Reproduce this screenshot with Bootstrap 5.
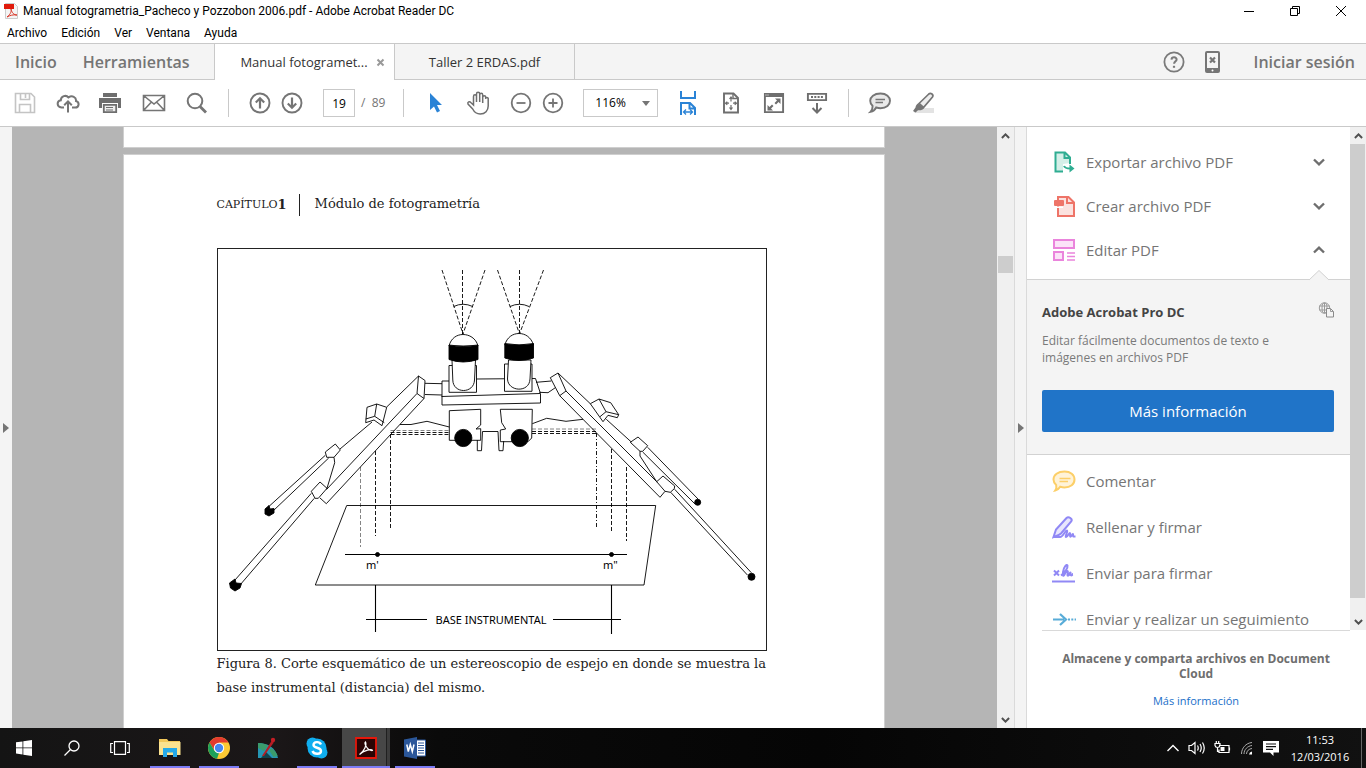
<!DOCTYPE html>
<html lang="es">
<head>
<meta charset="utf-8">
<meta name="viewport" content="width=device-width, initial-scale=1">
<title>Manual fotogrametria_Pacheco y Pozzobon 2006.pdf - Adobe Acrobat Reader DC</title>
<link href="https://cdn.jsdelivr.net/npm/bootstrap@5.3.0/dist/css/bootstrap.min.css" rel="stylesheet">
<style>
:root{--ui:"Open Sans","Noto Sans",sans-serif;--line:#c9c9c9;--strip:#f4f4f4;--ink:#757575}
body{font-family:var(--ui);font-size:12px;line-height:16px;color:#000;background:#fff}
button,input,select{font-family:inherit;color:inherit}
svg{display:block;flex:none}
.flatbtn{border:0;background:none;padding:0;display:flex;align-items:center;justify-content:center}
.titlebar{height:22px;padding-right:2px;font-family:Roboto,sans-serif}
.titlebar h1{font-size:12px;line-height:16px;font-weight:400}
.winbtn{width:46px;height:20px}
.menubar{height:21px;gap:14px;padding-left:7px;font-family:Roboto,sans-serif}
.menubar a,.tabstrip a{color:inherit;text-decoration:none}
.tabstrip{height:37px;background:var(--strip);border-top:1px solid var(--line);font-size:16px;color:var(--ink)}
.rule{border-bottom:1px solid var(--line)}
.home{width:215px;border-right:1px solid var(--line);padding-left:15px;gap:26px;font-weight:600}
.doctab{width:180px;font-size:13px;color:#333;border-right:1px solid var(--line)}
.doctab.active{background:#fff}
.account{gap:30px;padding-right:11px;font-weight:600}
.tools{height:47px;padding-left:12px;color:#757575}
.tgroup{display:flex;align-items:center;gap:17px}
.pair{display:flex;align-items:center;gap:6px}
.tool{width:26px;height:28px}
.vsep{width:1px;height:28px;background:var(--line);margin:0 18px}
.pager{margin-left:18px}
.pageno{width:32px;height:28px;border:1px solid var(--line);padding:0;text-align:center;color:#000;font-size:12px}
.zoombox{width:75px;height:28px;border:1px solid var(--line);padding:0 0 0 11px;color:#000;font-size:12px;appearance:none;background:#fff}
.zoomwrap{position:relative}
.zoomwrap svg{position:absolute;right:8px;top:12px;pointer-events:none}
.edge{width:12px;background:var(--strip)}
.edge.right{width:13px;border-left:1px solid #dadada;border-right:1px solid #dadada}
.canvas{background:#b5b5b5;min-width:0;padding-right:2px}
.sheet{width:762px;max-width:100%;background:#fff;border:1px solid #cfcfcf}
.sheet.prev{height:21px;border-top:0;margin-bottom:6px}
.sheet.current{height:700px;padding:39px 117px 0 93px;font-family:"DejaVu Serif",serif;color:#222}
.chapter{height:22px;margin-bottom:32px;font-size:13px}
.chapter .cap{font-size:11px}
.chapter .head{border-left:1px solid #222;margin-left:12px;padding-left:15px;height:22px;line-height:20px}
.plate{border:1px solid #222;width:100%}
.plate svg{width:100%;height:auto}
.legend-text{font-size:13px;line-height:24px;margin:1px 0 0}
.sbar{width:17px;background:#f0f0f0;padding:0 1px}
.sbar .thumb{background:#cdcdcd;height:17px;margin-top:112px}
.arrow{height:17px}
.side{width:339px}
.sidelist{height:503px;overflow:hidden}
.sidelist .scroll{width:16px;flex:none;background:#f0f0f0}
.sidelist .scroll .bar{background:#cdcdcd;margin-right:1px}
.arrow.low{height:32px;padding-top:16px}
.entries{padding-top:13px}
.entries.more{padding-top:3px}
.entry{width:100%;height:44px;padding:0 25px;font-size:15px;line-height:20px;color:#757575;justify-content:flex-start}
.entry svg:first-child{margin-right:10px}
.entry.tall{height:46px}
.promo{position:relative;background:var(--strip);border-top:1px solid #d2d2d2;border-bottom:1px solid #d2d2d2;height:176px;margin-top:7px;padding:22px 16px 0 15px}
.promo .notch{position:absolute;top:-11px;right:20px}
.promo h2{font-size:13px;line-height:20px;font-weight:700;color:#444;margin:0 0 10px}
.promo p{font-size:12px;line-height:17px;color:#7a7a7a;margin:0 0 24px;padding-right:32px}
.promo .cta{height:42px;font-size:15px;background:#2074c8;color:#fff;border:0;border-radius:2px;padding:0}
.store{margin:0 16px 0 15px;border-top:1px solid #d9d9d9;padding:20px 8px 0;font-size:12px;line-height:15px;color:#6e6e6e}
.store a{color:#1a6fc9;text-decoration:none;font-size:11px}
.taskbar{height:40px;background:linear-gradient(90deg,#141414,#1b1718 20%,#0a0a0a 32%,#050505 60%,#111);color:#fff}
.taskbtn{width:48px;height:40px;position:relative}
.taskapps{gap:1px;padding-left:2px}
.running::after{content:"";position:absolute;left:4px;right:4px;bottom:0;height:2px;background:#7b7bf5}
.running.front{background:linear-gradient(90deg,#474747 44px,#202020 44px,#202020 45px,#3c3c3c 45px)}
.running.front::after{left:0;right:0}
.tray{gap:8px;padding-right:4px}
.clock{font-size:11px;line-height:17px;width:66px;text-align:center}
.desk{width:1px;height:40px;background:#666}
</style>
</head>
<body class="vh-100 d-flex flex-column overflow-hidden">
<svg width="0" height="0" class="position-absolute" aria-hidden="true">
  <symbol id="up" viewBox="0 0 9 6"><path d="M.9 5 4.500 1.400 8.100 5" fill="none" stroke="#505050" stroke-width="2"/></symbol>
  <symbol id="chev" viewBox="0 0 12 8"><path d="M1 1.500 6 6.300 11 1.500" fill="none" stroke="#6e6e6e" stroke-width="2.400"/></symbol>
</svg>

<header>
  <div class="titlebar d-flex align-items-center">
    <svg class="ms-1 me-1" width="15" height="16" viewBox="0 0 15 16"><path d="M1.500.5h9l3 3V15.500h-12z" fill="#f4f4f4" stroke="#ccc"/><path d="M-2 1h12v5H-2z" fill="#e01b0c"/><path d="M3 14c4-3 4.500-6 4-8 1 4 3 6 6 6-4-.6-7 .4-10 2z" fill="none" stroke="#d9382a"/></svg>
    <h1 class="m-0 flex-grow-1">Manual fotogrametria_Pacheco y Pozzobon 2006.pdf - Adobe Acrobat Reader DC</h1>
    <button class="flatbtn winbtn" aria-label="Minimizar"><svg width="12" height="12"><path d="M1 6.500h10" stroke="#000"/></svg></button>
    <button class="flatbtn winbtn" aria-label="Restaurar"><svg width="12" height="12" fill="none" stroke="#000"><path d="M1.500 3.500h7v7h-7zM3.500 3V1.500h7v7H9"/></svg></button>
    <button class="flatbtn winbtn" aria-label="Cerrar"><svg width="12" height="12"><path d="M1 1 11 11M11 1 1 11" stroke="#000"/></svg></button>
  </div>
  <nav class="menubar d-flex align-items-center" aria-label="Menú">
    <a href="#">Archivo</a><a href="#">Edición</a><a href="#">Ver</a><a href="#">Ventana</a><a href="#">Ayuda</a>
  </nav>
  <div class="tabstrip d-flex">
    <nav class="home rule d-flex align-items-center"><a href="#">Inicio</a><a href="#">Herramientas</a></nav>
    <div class="doctab active d-flex align-items-center justify-content-center"><a href="#" class="ms-3">Manual fotogramet...</a>
      <button class="flatbtn ms-2" aria-label="Cerrar pestaña"><svg width="9" height="9"><path d="M1.500 1.500 7.500 7.500M7.500 1.500 1.500 7.500" stroke="#999" stroke-width="2"/></svg></button></div>
    <div class="doctab rule d-flex align-items-center justify-content-center"><a href="#">Taller 2 ERDAS.pdf</a></div>
    <div class="account rule flex-grow-1 d-flex align-items-center justify-content-end">
      <div class="tgroup">
        <button class="flatbtn" aria-label="Ayuda"><svg width="22" height="22" fill="none" stroke="#7a7a7a"><circle cx="11" cy="11" r="9.600" stroke-width="1.800"/><path d="M8.500 8.600c.2-3.200 5.300-3 5.100 0-.1 1.700-2.500 1.900-2.500 4.200" stroke-width="2"/><path d="M11 14.800v2" stroke-width="2.200"/></svg></button>
        <button class="flatbtn" aria-label="Dispositivos móviles"><svg width="22" height="22"><path d="M5 0h11a2 2 0 0 1 2 2v18a2 2 0 0 1-2 2H5a2 2 0 0 1-2-2V2a2 2 0 0 1 2-2zm0 2v15h11V2z" fill="#757575" fill-rule="evenodd"/><path d="m8 6.500 5 5m0-5-5 5" stroke="#757575" stroke-width="2.200"/><circle cx="10.500" cy="19.500" r="1" fill="#fff"/></svg></button>
      </div>
      <a href="#">Iniciar sesión</a>
    </div>
  </div>
  <div class="tools rule d-flex align-items-center" role="toolbar">
    <div class="tgroup">
      <button class="flatbtn tool" aria-label="Guardar"><svg width="22" height="22" fill="none" stroke="#c4c4c4" stroke-width="1.600"><path d="M1.500 1.500H17l3.500 3.500v15.500h-19zM6.500 1.500v6h9v-6M5.500 20v-7.500h11V20"/><path d="M11.500 2v4"/></svg></button>
      <button class="flatbtn tool" aria-label="Subir"><svg width="24" height="22" fill="none" stroke="#757575" stroke-width="2"><path d="M8 15.500H5.500C.5 15 .5 9 4.800 8.300 5 4 10 2.500 12.500 5.500 16 3 20.500 5 20 9c4 1.300 3 6.500-.7 6.500H16M12 20.500V9.500M8.200 13.200 12 9.400l3.800 3.800"/></svg></button>
      <button class="flatbtn tool" aria-label="Imprimir"><svg width="24" height="22"><path d="M4 1h14v4H4zM0 6h22v10h-3v-5H3v5H0z" fill="#6e6e6e"/><path d="M4.800 12.800h12.400v7.400H4.800z" fill="#eee" stroke="#6e6e6e" stroke-width="1.800"/><path d="M7 15.500h7M7 18h7" stroke="#6e6e6e"/></svg></button>
      <button class="flatbtn tool" aria-label="Correo"><svg width="24" height="22" fill="none" stroke="#757575" stroke-width="1.600"><path d="M1.500 3.500h21v15h-21zM1.500 3.500 12 12 22.500 3.500M1.500 18.500l7.500-8M22.500 18.500l-7.500-8"/></svg></button>
      <button class="flatbtn tool" aria-label="Buscar"><svg width="22" height="22" fill="none" stroke="#757575"><circle cx="9" cy="9" r="7.300" stroke-width="2"/><path d="m14 14.500 6 6" stroke-width="2.800"/></svg></button>
    </div>
    <span class="vsep"></span>
    <div class="pair">
      <button class="flatbtn tool" aria-label="Página anterior"><svg width="22" height="22" fill="none" stroke="#757575"><circle cx="11" cy="11" r="9.500" stroke-width="1.900"/><path d="M11 16.500V6.500M6.800 10.500 11 6.300l4.200 4.200" stroke-width="2.200"/></svg></button>
      <button class="flatbtn tool" aria-label="Página siguiente"><svg width="22" height="22" fill="none" stroke="#757575"><circle cx="11" cy="11" r="9.500" stroke-width="1.900"/><path d="M11 5.500v10M6.800 11.500l4.200 4.200 4.200-4.200" stroke-width="2.200"/></svg></button>
    </div>
    <div class="pair pager"><input class="pageno" aria-label="Página" value="19"><span>/&nbsp; 89</span></div>
    <span class="vsep"></span>
    <div class="tgroup">
      <button class="flatbtn tool" aria-label="Seleccionar"><svg width="14" height="22"><path d="M2 1v17l4-3.500 3 6 3-1.500-3-6h5z" fill="#2a83d6"/></svg></button>
      <button class="flatbtn tool" aria-label="Mano"><svg width="24" height="24" viewBox="0 0 24 24" fill="none" stroke="#6e6e6e" stroke-width="1.500"><path d="M7.500 14V5.500c0-2.300 3-2.300 3 0V11 3c0-2.300 3.200-2.300 3.200 0v8V4c0-2.200 3-2.200 3 0v8V6.500c0-2.200 3-2.200 3 0V7l1-.5c1.500 0 1.700 1 1.500 2v6.500c0 4.500-3 8-8 8-4 0-6-2-7.500-5L2 13c-.8-2 1.500-3 2.800-1.500z"/></svg></button>
      <div class="pair">
        <button class="flatbtn tool" aria-label="Alejar"><svg width="22" height="22" fill="none" stroke="#757575" stroke-width="1.800"><circle cx="11" cy="11" r="9.300"/><path d="M6.500 11h9"/></svg></button>
        <button class="flatbtn tool" aria-label="Acercar"><svg width="22" height="22" fill="none" stroke="#757575" stroke-width="1.800"><circle cx="11" cy="11" r="9.300"/><path d="M6.500 11h9M11 6.500v9"/></svg></button>
      </div>
      <div class="zoomwrap"><select class="zoombox" aria-label="Nivel de zoom"><option>116%</option></select><svg width="8" height="5"><path d="M0 0h8L4 5z" fill="#757575"/></svg></div>
      <button class="flatbtn tool" aria-label="Ajustar a ancho"><svg width="18" height="24" fill="none" stroke="#2a83d6" stroke-width="2"><path d="M2 0v7h14V0M2 24V12h9l5 5v7M10.500 12v5.500H16"/><path d="M4.500 21h9M7 18.500 4.500 21 7 23.500M11 18.500l2.500 2.500-2.500 2.500" stroke-width="1.300"/></svg></button>
      <button class="flatbtn tool" aria-label="Ajustar a página"><svg width="18" height="22" fill="none" stroke="#6e6e6e"><path d="M2 1.500h9.500L16 6v14.500H2z" stroke-width="1.900"/><path d="M11 2v4.500h4.500" stroke-width="1.400"/><path d="M9 5v4.500M9 13v4.500M3.500 11.200H7M11 11.200h3.500M7.500 7 9 5l1.500 2M7.500 15.500l1.500 2 1.500-2M5.300 9.700l-1.800 1.500 1.800 1.500M12.700 9.700l1.800 1.500-1.800 1.500" stroke-width="1.200"/></svg></button>
      <button class="flatbtn tool" aria-label="Pantalla completa"><svg width="22" height="22"><path d="M1.900 1.900h18.200v18.200H1.900z" fill="#fff" stroke="#6e6e6e" stroke-width="1.900"/><path d="M1 1h20v4H1z" fill="#6e6e6e"/><path d="M12 6.500h5.500V12l-2-2-2.500 2.500-1.500-1.500L14 8.500zM10 18.500H4.500V13l2 2L9 12.500l1.500 1.500L8 16.500z" fill="#6e6e6e"/><path d="M2.500 3h1m1 0h1" stroke="#fff"/></svg></button>
      <button class="flatbtn tool" aria-label="Modo de lectura"><svg width="22" height="22" fill="none" stroke="#6e6e6e"><path d="M1.900 1.900h18.200v6.200H1.900z" stroke-width="1.900"/><path d="M5 5h12" stroke-width="2" stroke-dasharray="2 1.300"/><path d="M11 11v9M6.500 16l4.500 4.500 4.500-4.500" stroke-width="2"/></svg></button>
    </div>
    <span class="vsep"></span>
    <div class="tgroup">
      <button class="flatbtn tool" aria-label="Comentario"><svg width="24" height="22"><path d="M12.500 1.500c6 0 9.500 3.300 9.500 7.300s-3.500 7.400-9.500 7.400c-1.600 0-3-.3-4.300-.7C7 18 4.500 19.500 2.500 19.800c1.500-1.500 2.200-3.600 2-6C3 12.500 2.200 11 2.200 8.800c0-4 3.800-7.300 10.300-7.300z" fill="#e9e9e9" stroke="#757575" stroke-width="1.900"/><path d="M7.500 7.500h9.500M7.500 10.500H15" stroke="#757575" stroke-width="1.300"/></svg></button>
      <button class="flatbtn tool" aria-label="Resaltar"><svg width="24" height="24"><path d="M8 17h15v5H3z" fill="#e3e3e3"/><path d="M8 12.500 17.800 3c2-1.800 5.200.8 3.700 3L12.500 16.500z" fill="#eee" stroke="#757575" stroke-width="1.700"/><path d="m7 12.500 6 4.500c-1.500 2.500-4 2.500-6 2.200L4.500 21.500 2 20l2.500-3.500c.2-2 1-3 2.500-4z" fill="#757575"/></svg></button>
    </div>
  </div>
</header>

<main class="flex-grow-1 d-flex overflow-hidden">
  <button class="flatbtn edge" aria-label="Panel de navegación"><svg width="6" height="10"><path d="M0 0v10l6-5z" fill="#757575"/></svg></button>
  <section class="canvas flex-grow-1 overflow-hidden" aria-label="Documento">
    <div class="sheet prev mx-auto"></div>
    <article class="sheet current mx-auto">
      <div class="chapter d-flex align-items-center"><span class="cap">CAPÍTULO</span><b>1</b><span class="head">Módulo de fotogrametría</span></div>
      <div class="plate">
        <svg viewBox="218 249 548 401" fill="none" stroke="#000" stroke-width=".9" font-family="Noto Sans, sans-serif" role="img" aria-label="Estereoscopio de espejo">
          <!-- lines of sight -->
          <g stroke-dasharray="4 2">
            <path d="M442 270 463 334M462.500 270V334M485 270 463 334M497.500 270 519.500 334M519.500 270V334M543.500 270 519.500 334"/>
            <path d="M390.500 432.500H449M390.500 434.500H449M390.500 434V530M375.500 451V536M532 431.500H596M532 433.500H596M611.500 449V532M626.500 467V541"/>
            <path d="M596.500 433V527" stroke-dasharray="4 2 1 2"/>
            <path d="M390.500 430.500H449M360.500 467V547M532 429H596" stroke="#777"/>
          </g>
          <path d="M453.700 306.500Q463 302 472.700 306.500M510 306.500Q519.500 302 529 306.500"/>
          <!-- crossbeam -->
          <path d="M425 383.300 442 383.700M425 394.500 442 395M449 381H442V405L540.500 403V393.500L535.500 378.500 476.500 379M441.500 396.500 540 393.500"/>
          <path d="M536 382.300 551.300 381M539.300 392.300 548 392.700 555.300 387.700"/>
          <!-- eyepieces -->
          <g fill="#fff">
            <path d="M449 365.500H476.500V392.300H449zM504.500 364H532V391.300H504.500z"/>
            <path d="M452 360 452.800 380C453 394 474 394 474.500 380L475.500 360zM508.500 360 507.500 379C508 392 529.500 393 530 379L531 360z"/>
            <path d="M449 346C451 338 457 334.500 463 334.500S476 338 478 346zM504.800 345C507 337 513 333.500 519 333.500S531 337 533.500 345z"/>
          </g>
          <path d="M449 345Q463 348 478 345V359.500Q463 364.500 449 359.500zM504.800 343.500Q519 346.500 533.500 343.500V358Q519 363 504.800 358z" fill="#000"/>
          <!-- mirrors -->
          <path d="M449.300 410.700 480.700 409.300V425L476 429 480.700 428.700V440.300H449.300zM500.300 409.300H532.300L531.700 438 528 441.700H500.300V430L505.700 429 501.700 422.700z"/>
          <path d="M477.300 440V450.700H481.500L482.500 431.500H498L499 450.700H503L503.700 441"/>
          <circle cx="463.300" cy="438" r="8.600" fill="#000"/><circle cx="519.800" cy="438" r="8.600" fill="#000"/>
          <path d="M400 424.500H411L427 421.300 449.300 427M532.300 423.700 546.700 418.300 566 421.300 583 419.300"/>
          <!-- left arm and legs -->
          <path d="M418.500 376 425 380.500 424 398.500 417 393.500zM418.500 376 386.700 407M372 422 340 449M417 393.500 326.700 489.300M424 398.500 326.300 503.700 320 498"/>
          <path d="M367 407.300 376.700 404 386.700 407.300 382 425.700 374 420 365.700 422.700zM365.700 419 374.700 416.300 384.300 422.700M376.700 404 374.700 416.300"/>
          <path d="M325.300 452 335.300 444 340.300 450 334 457.300H326.700zM334 457.300 334.700 462.700 326.700 489.300M311.300 491.300 320 482 327 488.300 318.300 498.300H315z"/>
          <path d="M325.300 455.300 268.300 507M328.700 458 273 511M311.300 493.300 235 580M314.300 498.300 240 585"/>
          <path d="M265 509 269 505.500 270 509 274 508.500 274 513 269 516 265 514zM229.500 583 235 579 236 583 241.500 583.500 240 588 235 591 230.500 588z" fill="#000"/>
          <!-- right arm and legs -->
          <path d="M550.300 377.700 558 373 566 391 559.700 395.700zM558 373 590.300 403.700M606.300 419.300 631.300 442M566 391 656.700 481.700M559.700 395.700 660 497.300 665 491.300"/>
          <path d="M590.300 403.700 599 399 610.700 402.700 618.700 414.700 617.300 417.700 608 415.300 603 421.700zM599 399 606 411.700 618.700 414.700M606 411.700 600 416.700"/>
          <path d="M630.300 442.300 638 437 647.700 445.700 642.700 451.300H640zM640 451.300V456L656.700 481.700M656.700 481.700 663 476 674.700 486 674.300 488.700 670.300 492.300 665 491.300z"/>
          <path d="M647.700 447.300 698.300 499.300M642.700 452 695 504M674.700 489.300 751.300 572.700M670.700 492.300 747.700 575.300"/>
          <circle cx="697.700" cy="502.300" r="3" fill="#000"/><circle cx="751.500" cy="576.800" r="3.500" fill="#000"/>
          <!-- base plane -->
          <path d="M315.300 585 346.700 505.500H655.700L644 585z"/>
          <path d="M345 554.500H627M375.500 585V632M611.500 585V634M366 619.500H427M553 619.500H621" stroke-width="1.100"/>
          <circle cx="377.500" cy="554.500" r="2" fill="#000"/><circle cx="611.500" cy="554.500" r="2" fill="#000"/>
          <g fill="#000" stroke="none" font-size="11"><text x="366" y="569">m'</text><text x="603" y="569">m"</text><text x="491" y="624" text-anchor="middle">BASE INSTRUMENTAL</text></g>
        </svg>
      </div>
      <p class="legend-text">Figura 8. Corte esquemático de un estereoscopio de espejo en donde se muestra la base instrumental (distancia) del mismo.</p>
    </article>
  </section>
  <div class="sbar d-flex flex-column" aria-hidden="true">
    <div class="arrow d-flex align-items-center justify-content-center"><svg width="9" height="6"><use href="#up"/></svg></div>
    <div class="thumb"></div>
    <div class="arrow d-flex align-items-center justify-content-center mt-auto"><svg width="9" height="6" transform="rotate(180)"><use href="#up"/></svg></div>
  </div>
  <button class="flatbtn edge right" aria-label="Panel de herramientas"><svg width="6" height="10"><path d="M0 0v10l6-5z" fill="#757575"/></svg></button>
  <aside class="side d-flex flex-column">
    <div class="sidelist d-flex">
      <div class="flex-grow-1">
        <div class="entries">
          <button class="flatbtn entry"><svg width="24" height="24"><path d="M3.500 2.500H13l5 5V13l-7 1v7.500H3.500z" fill="#d5efe8"/><path d="M11 21.500H3.500v-19H13l5 5V14M12.500 3v5H18" fill="none" stroke="#2fad92" stroke-width="2"/><path d="M12 16c1 2.500 3 2.500 6 2.500" stroke="#2fad92" stroke-width="2" fill="none"/><path d="m17.500 14.500 5 4-5 4z" fill="#2fad92"/></svg>Exportar archivo PDF<svg class="ms-auto" width="12" height="8"><use href="#chev"/></svg></button>
          <button class="flatbtn entry"><svg width="24" height="24"><path d="M6 3h10.500L22 8.500V22H6z" fill="#fbe2df" stroke="#ee7468" stroke-width="2"/><path d="M15 3v6h6" fill="none" stroke="#ee7468" stroke-width="2"/><path d="M4 12.500h7V14H4z" fill="#fff"/><rect x="2" y="6" width="10" height="6" rx="1" fill="#ee7468"/></svg>Crear archivo PDF<svg class="ms-auto" width="12" height="8"><use href="#chev"/></svg></button>
          <button class="flatbtn entry"><svg width="24" height="24" fill="#fbe3f8" stroke="#ea84dc" stroke-width="2"><path d="M2 2h20v8H2zM2 14h9v8H2z"/><path d="M15 15h8M15 18.500h8M15 22h8" stroke-width="1.400"/></svg>Editar PDF<svg class="ms-auto" width="12" height="8" transform="rotate(180)"><use href="#chev"/></svg></button>
        </div>
        <div class="promo">
          <svg class="notch" width="22" height="12"><path d="M0 12 11 1.500 22 12z" fill="#f4f4f4"/><path d="M1 11 11 1.500 21 11" fill="none" stroke="#d2d2d2"/></svg>
          <div class="d-flex justify-content-between align-items-start"><h2>Adobe Acrobat Pro DC</h2><svg width="16" height="16" viewBox="0 2 16 16" fill="none" stroke="#9a9a9a"><circle cx="6.500" cy="8" r="5.200"/><ellipse cx="6.500" cy="8" rx="2.500" ry="5.200"/><path d="M1.500 6h10M1.500 10h10M6.500 3v10"/><path d="M8.500 8.500h4l3 3v5.500h-7z" fill="#f4f4f4" stroke="#8a8a8a"/><path d="M12.500 8.500v3h3"/></svg></div>
          <p>Editar fácilmente documentos de texto e imágenes en archivos PDF</p>
          <button class="btn cta w-100">Más información</button>
        </div>
        <div class="entries more">
          <button class="flatbtn entry tall"><svg width="24" height="24"><path d="M12.500 2.500c6 0 10 3.300 10 8s-4 8-10 8c-1.600 0-3-.3-4.300-.7-1.200 2-3 3.200-5 3.700 1-1.500 1.500-3.600 1-5.500C2.500 14.500 1.500 12.700 1.500 10.500c0-4.700 4.500-8 11-8z" fill="#fff3d8" stroke="#fccf68" stroke-width="2"/><path d="M7.500 9.500h11M7.500 12.500H16" stroke="#fccf68" stroke-width="1.300"/></svg>Comentar</button>
          <button class="flatbtn entry tall"><svg width="24" height="24" fill="none" stroke="#9088f5" stroke-width="2"><path d="M1.500 22 4 14.500 14.500 3c2.200-2 6.500 1 4.700 3.500L9 18.500C7 20.500 4 21 1.500 22z" fill="#e8e6fd"/><path d="M1.500 22H8c3.500 0 5-7 7-6.500 1.500.7-2.500 6-1 6.500s3-4.500 4-4-.7 3.700.5 3.800 1.500-2.800 2.300-2.800-.3 2.500.7 2.500h2" stroke-width="1.900"/></svg>Rellenar y firmar</button>
          <button class="flatbtn entry tall"><svg width="24" height="24" fill="none" stroke="#9088f5" stroke-width="2"><path d="m2 9.500 5 5M7 9.500l-5 5"/><path d="M0 20.500h23"/><path d="M9 14.500C13 11.500 16 7 15.500 4.500 15 2.500 11.500 6 11 11c-.4 4.500.5 4.500 1.500 2.500s2.500-4 3.300-3.300-1.300 4.500.2 4.500 1.500-3.200 2.300-3.200-.5 3 1 3 1-1.500 1.700-1.500"/></svg>Enviar para firmar</button>
          <button class="flatbtn entry tall"><svg width="24" height="24" fill="none" stroke="#58acd8" stroke-width="2.200"><path d="M1 12.500h11M8 7l6 5.500L8 18"/><path d="M16 12.500h8" stroke-width="1.800" stroke-dasharray="2 1.300"/></svg>Enviar y realizar un seguimiento</button>
        </div>
      </div>
      <div class="scroll d-flex flex-column" aria-hidden="true">
        <div class="arrow d-flex align-items-center justify-content-center"><svg width="9" height="6"><use href="#up"/></svg></div>
        <div class="bar flex-grow-1"></div>
        <div class="arrow low d-flex align-items-center justify-content-center"><svg width="9" height="6" transform="rotate(180)"><use href="#up"/></svg></div>
      </div>
    </div>
    <div class="store text-center"><b class="d-block mb-2 pb-1">Almacene y comparta archivos en Document Cloud</b><a href="#">Más información</a></div>
  </aside>
</main>

<footer class="taskbar d-flex align-items-center">
  <button class="flatbtn taskbtn" aria-label="Inicio"><svg width="16" height="16" fill="#fff"><path d="M0 2.300 6.500 1.400v6.100H0zM7.300 1.200 16 0v7.500H7.300zM0 8.300h6.500v6.200L0 13.600zM7.300 8.300H16V16l-8.700-1.300z"/></svg></button>
  <button class="flatbtn taskbtn" aria-label="Buscar"><svg width="16" height="16" fill="none" stroke="#fff" stroke-width="1.300"><circle cx="10" cy="6" r="5"/><path d="M6.500 9.500.5 15.500"/></svg></button>
  <button class="flatbtn taskbtn" aria-label="Vista de tareas"><svg width="20" height="14" fill="none" stroke="#fff" stroke-width="1.200"><path d="M4.500.6h11v12.800h-11zM3 2.500H.7v9H3M17 2.500h2.300v9H17"/></svg></button>
  <div class="taskapps d-flex">
    <button class="flatbtn taskbtn running" aria-label="Explorador de archivos"><svg width="22" height="20"><path d="M0 1h8l1.500 2H21v14H0z" fill="#f3c85a"/><path d="M0 4h21.500v13H0z" fill="#fbe28f"/><path d="M4 19V10h14v9h-4v-4.500H8V19z" fill="#25a9e8"/></svg></button>
    <button class="flatbtn taskbtn running" aria-label="Chrome"><svg width="22" height="22"><circle cx="11" cy="11" r="11" fill="#fcc934"/><path d="M1.500 5.500A11 11 0 0 1 20.500 5.500H11L6.500 13.500z" fill="#e33b2e"/><path d="M1.500 5.500 6.500 13.800 11 16 9 21.800A11 11 0 0 1 1.500 5.500z" fill="#1da05a"/><circle cx="11" cy="11" r="5.200" fill="#fff"/><circle cx="11" cy="11" r="4.200" fill="#4687f1"/></svg></button>
    <button class="flatbtn taskbtn" aria-label="ERDAS"><svg width="22" height="22"><path d="M1 21V6c10 0 18 5 20 15z" fill="#2596b4"/><path d="M1 6c4 0 8 1 10 2.500L7 14 1 11zM14 11c3 1.500 6 5 6.500 8l-4 1-4-6z" fill="#3b9b6c"/><path d="M4 21l5-6 6 6z" fill="#11424f"/><path d="M5 19 14.500 4l2.300 1.500L7 19z" fill="#b51d24"/><circle cx="16" cy="3" r="2.200" fill="#c41e25"/></svg></button>
    <button class="flatbtn taskbtn running" aria-label="Skype"><svg width="22" height="22"><circle cx="11" cy="11" r="9.500" fill="#10aeef"/><circle cx="6.500" cy="6.500" r="6" fill="#10aeef"/><circle cx="15.500" cy="15.500" r="6" fill="#10aeef"/><path d="M15 7.500C13.500 4 7.500 4.500 7.500 8c0 3.500 7.500 2 7.500 6 0 3.500-7 4-8.500 0" fill="none" stroke="#fff" stroke-width="2.400"/></svg></button>
    <button class="flatbtn taskbtn running front" aria-label="Acrobat Reader"><svg width="22" height="22"><path d="M1 1h20v20H1z" fill="#2a0505" stroke="#e5170b" stroke-width="1.800"/><path d="M4.500 17.500C9 14.500 12 8 10.500 5c-1.500 1 1.500 9 7 8.500 0-2-9-.5-13 4z" fill="none" stroke="#fff" stroke-width="1.200"/></svg></button>
    <button class="flatbtn taskbtn running" aria-label="Word"><svg width="22" height="22"><path d="M11 3h10.500v16H11z" fill="#fff" stroke="#2b579a"/><path d="M14 6h6M14 8.500h6M14 11h6M14 13.500h6M14 16h6" stroke="#2b579a" stroke-width="1.200"/><path d="M0 2.500 13 0v22L0 19.500z" fill="#2b579a"/><path d="m2.800 7.500 1.500 7 2-7 2 7 1.700-7" fill="none" stroke="#fff" stroke-width="1.500"/></svg></button>
  </div>
  <div class="tray d-flex align-items-center ms-auto">
    <svg width="14" height="12" fill="none" stroke="#fff" stroke-width="1.400"><path d="M1.500 9 7 3.500 12.500 9"/></svg>
    <svg width="18" height="16" fill="none" stroke="#fff" stroke-width="1.200"><path d="M1 5.500h2.500L7 2.500v11L3.500 10.500H1zM9.500 5.500q1.500 2.500 0 5M12 4q2.500 4 0 8M14.500 2.500q3.500 5.500 0 11"/></svg>
    <svg width="17" height="16" fill="none" stroke="#fff" stroke-width="1.200"><path d="M5 5.500h10v7H5v-3M15.500 7.500v3M1 3.500h5v2q-.5 2-2.500 2T1 5.500zM2.300 1v2.500M4.700 1v2.500M3.500 7.500v4H5"/><path d="M6.500 7h4v4h-4z" fill="#fff" stroke="none"/></svg>
    <svg width="16" height="16" fill="none" stroke="#aaa"><path d="M2.500 14C2.500 8 7 3 13 2.500M5 14c0-4.500 3.500-8 8-8.500M7.500 14c0-3 2.500-5.300 5.500-5.500" /><path d="M10 14.500a3.500 3.500 0 0 1 3-3v3z" fill="#fff" stroke="none"/></svg>
    <svg width="16" height="16"><path d="M0 1h16v11.500h-5.500V16L7 12.500H0z" fill="#fff"/><path d="M3 4h10M3 6.700h10M3 9.400h7" stroke="#111" stroke-width="1.200"/></svg>
    <div class="clock"><div>11:53</div><div>12/03/2016</div></div>
    <span class="desk"></span>
  </div>
</footer>
<script src="https://cdn.jsdelivr.net/npm/bootstrap@5.3.0/dist/js/bootstrap.bundle.min.js"></script>
</body>
</html>
